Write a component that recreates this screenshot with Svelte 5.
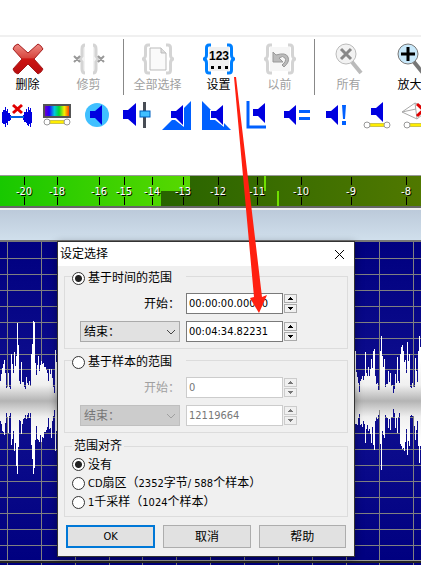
<script lang="ts">
  let mode = $state('time')
  let align = $state('none')
  let startTime = $state('00:00:00.00000')
  let endTime = $state('00:04:34.82231')
  let startSample = $state('0')
  let endSample = $state('12119664')

  const marks = [
    { db: -20, x: 24 },
    { db: -18, x: 57 },
    { db: -16, x: 99 },
    { db: -15, x: 124 },
    { db: -14, x: 152 },
    { db: -13, x: 183 },
    { db: -12, x: 218 },
    { db: -11, x: 257 },
    { db: -10, x: 301 },
    { db: -9, x: 351 },
    { db: -8, x: 406 }
  ]

  const columns = Array.from({ length: 60 }, (_, i) => Math.round(7 + i * 33.85))
  const rows = Array.from({ length: 60 }, (_, i) => Math.round(16 + i * 15.92))

  // peaks above and below the centre line, one value per pixel column
  const chunks = [
    {
      start: 0,
      up: [20, 27, 33, 37, 41, 28, 13, 14, 28, 14, 12, 47, 37, 28, 49, 35, 45, 78, 56, 20, 17, 39, 19, 19, 14, 12, 24, 18, 16, 20, 15, 47, 57, 80, 79, 38, 26, 36, 45, 30, 36, 40, 37, 38, 34, 34, 31, 28, 20, 32, 27, 32, 23, 14, 8, 51, 39],
      down: [20, 23, 30, 31, 34, 22, 12, 16, 32, 15, 12, 44, 38, 30, 50, 42, 65, 73, 46, 19, 20, 33, 23, 18, 17, 14, 18, 14, 12, 17, 12, 44, 58, 73, 67, 39, 25, 38, 39, 41, 34, 41, 36, 37, 31, 31, 29, 26, 17, 28, 27, 37, 20, 15, 9, 50, 30]
    },
    {
      start: 355,
      up: [50, 29, 24, 18, 9, 20, 22, 25, 21, 25, 49, 28, 25, 34, 25, 32, 42, 33, 50, 52, 25, 17, 18, 11, 11, 50, 65, 45, 34, 42, 14, 17, 17, 30, 19, 28, 15, 16, 8, 12, 27, 18, 44, 20, 18, 47, 54, 56, 50, 39, 41, 28, 59, 40, 47, 14, 13, 18, 14, 14, 43, 30, 19, 50, 65, 54],
      down: [23, 23, 24, 17, 13, 24, 23, 26, 20, 23, 42, 28, 24, 30, 28, 33, 42, 26, 44, 49, 20, 16, 18, 14, 9, 43, 69, 30, 34, 37, 14, 16, 17, 27, 18, 29, 16, 16, 8, 12, 27, 17, 32, 16, 12, 43, 45, 48, 47, 50, 41, 28, 54, 40, 45, 15, 14, 15, 15, 25, 39, 29, 20, 45, 62, 45]
    }
  ]

  function wavePath(start: number, up: number[], down: number[]) {
    return up.map((u, i) => `M${start + i} ${159 - u}h1v${u + down[i]}h-1z`).join('')
  }
</script>

{#snippet speaker(x: number, y: number)}
  <path d="M{x} {y + 6}h5l7-6v20l-7-7h-5z" fill="#0000e0" />
{/snippet}

{#snippet range(y: number)}
  <path d="M8 {y}h15" stroke="#999" stroke-width="4" />
  <path d="M8 {y}h15" stroke="#ffee00" stroke-width="3" />
  <circle cx="6" cy={y} r="3" fill="#fff" stroke="#999" />
  <circle cx="26" cy={y} r="3" fill="#fff" stroke="#999" />
{/snippet}

{#snippet braces(color: string)}
  <path
    d="M8 2H6Q3.500 2 3.500 5V12Q3.500 15 1 16Q3.500 17 3.500 20V27Q3.500 30 6 30H8M24 2h2q2.500 0 2.500 3v7q0 3 2.500 4q-2.500 1-2.500 4v7q0 3-2.500 3h-2"
    fill="none"
    stroke={color}
    stroke-width="3"
  />
{/snippet}

{#snippet spinner(name: string, disabled: boolean)}
  <span class="spinner">
    <button type="button" aria-label="{name} +" {disabled}>
      <svg width="5" height="3"><path d="M2 0h1v1h1v1h1v1H0V2h1V1h1z" fill="currentColor" /></svg>
    </button>
    <button type="button" aria-label="{name} -" {disabled}>
      <svg width="5" height="3"><path d="M0 0h5v1H4v1H3v1H2V2H1V1H0z" fill="currentColor" /></svg>
    </button>
  </span>
{/snippet}

{#snippet endSelect(disabled: boolean)}
  <span class="select">
    <select aria-label="结束" {disabled}>
      <option>结束：</option>
    </select>
    <svg width="10" height="6"><path d="M1 1l4 4 4-4" fill="none" stroke="currentColor" /></svg>
  </span>
{/snippet}

<main>
  <header>
    <div class="tools">
      <button class="tool">
        <svg width="32" height="32" viewBox="0 0 32 32">
          <defs>
            <linearGradient id="red" x1="0" y1="0" x2="0" y2="1">
              <stop offset="0" stop-color="#ee8a84" />
              <stop offset=".45" stop-color="#d84840" />
              <stop offset=".5" stop-color="#cc1512" />
              <stop offset="1" stop-color="#b80c10" />
            </linearGradient>
          </defs>
          <path d="M6 1L16 10L26 1Q29 2 31 6L22 16L31 26Q30 29 26 31L16 21L6 31Q2 30 1 26L10 16L1 6Q2 2 6 1Z" fill="url(#red)" stroke="#a51c1c" />
        </svg>
        删除
      </button>
      <button class="tool" disabled>
        <svg width="32" height="32" viewBox="0 0 32 32">
          <path d="M12 2q-3 0-3 4v7l-2 3 2 3v7q0 4 3 4M20 2q3 0 3 4v7l2 3-2 3v7q0 4-3 4" fill="#f2f2f2" stroke="#d4d4d4" stroke-width="3" />
          <path d="M1 13l6 6M7 13l-6 6M25 13l6 6M31 13l-6 6" stroke="#999" stroke-width="2" />
        </svg>
        修剪
      </button>
      <span class="sep"></span>
      <button class="tool" disabled>
        <svg width="32" height="32" viewBox="0 0 32 32">
          {@render braces('#d4d4d4')}
          <path d="M8 5h11l5 5v17H8z" fill="#fafafa" stroke="#bbb" />
          <path d="M19 5v5h5" fill="#ddd" stroke="#bbb" />
        </svg>
        全部选择
      </button>
      <button class="tool">
        <svg width="32" height="32" viewBox="0 0 32 32">
          <path d="M6 4h20v24H6z" fill="#f0f0f0" />
          {@render braces('#0080ff')}
          <text class="digits" x="16" y="17" text-anchor="middle">123</text>
          <path d="M8 23h3v3H8zM15 23h3v3h-3zM22 23h3v3h-3z" fill="#000" />
        </svg>
        设置
      </button>
      <button class="tool" disabled>
        <svg width="32" height="32" viewBox="0 0 32 32">
          <path d="M6 4h20v24H6z" fill="#f6f6f6" />
          {@render braces('#d4d4d4')}
          <path d="M9 9v10h10l-4-4q4-3 6 0t-3 7l2 2q6-5 4-10t-12-2z" fill="#bbb" stroke="#999" />
        </svg>
        以前
      </button>
      <span class="sep"></span>
      <button class="tool" disabled>
        <svg width="32" height="32" viewBox="0 0 32 32">
          <path d="M19 19l9 11" stroke="#bbb" stroke-width="4" />
          <circle cx="13" cy="11" r="10" fill="#f2f2f2" stroke="#bbb" />
          <path d="M8 6l10 10M18 6L8 16" stroke="#888" stroke-width="3" />
        </svg>
        所有
      </button>
      <button class="tool">
        <svg width="32" height="32" viewBox="0 0 32 32">
          <path d="M20 19l9 11" stroke="#777" stroke-width="4" />
          <circle cx="14" cy="11" r="10" fill="#c8e8fa" stroke="#777" />
          <path d="M14 4v14M7 11h14" stroke="#000" stroke-width="3" />
        </svg>
        放大
      </button>
    </div>

    <div class="effects">
      <button aria-label="静音">
        <svg width="32" height="32" viewBox="0 0 32 32">
          <path d="M1 13h1v11H1zM2 11h2v14H2zM4 8h1v20H4zM5 12h1v12H5zM6 10h1v16H6zM7 14h2v8H7zM9 16h1v5H9zM22 16h1v5h-1zM23 13h2v10h-2zM25 10h1v14h-1zM26 13h1v13h-1zM27 8h1v19h-1zM28 11h1v14h-1zM29 9h1v19h-1zM30 13h1v11h-1z" fill="#0000e0" />
          <path d="M9 18h14" stroke="#0060e0" stroke-width="2" />
          <path d="M12 6l9 8M21 6l-9 8" stroke="#e00000" stroke-width="3" />
        </svg>
      </button>
      <button aria-label="频谱">
        <svg width="32" height="32" viewBox="0 0 32 32">
          <defs>
            <linearGradient id="spectrum">
              <stop offset="0" stop-color="#8000c0" />
              <stop offset=".2" stop-color="#2000ff" />
              <stop offset=".4" stop-color="#00c8e0" />
              <stop offset=".58" stop-color="#00d830" />
              <stop offset=".78" stop-color="#f8f000" />
              <stop offset="1" stop-color="#ff2000" />
            </linearGradient>
          </defs>
          <rect x="3" y="6" width="26" height="12" fill="url(#spectrum)" stroke="#555" stroke-width="2" />
          {@render range(23)}
        </svg>
      </button>
      <button aria-label="音量">
        <svg width="32" height="32" viewBox="0 0 32 32">
          <circle cx="16" cy="16" r="12" fill="#40c0ff" />
          {@render speaker(9, 6)}
        </svg>
      </button>
      <button aria-label="调节音量">
        <svg width="32" height="32" viewBox="0 0 32 32">
          <path d="M2 11h5l8-7v23l-8-7H2z" fill="#0000e0" />
          <path d="M22 3h3v26h-3z" fill="#484d55" />
          <rect x="19" y="12" width="10" height="6" fill="#40c0ff" stroke="#0060c0" />
        </svg>
      </button>
      <button aria-label="淡入">
        <svg width="32" height="32" viewBox="0 0 32 32">
          <path d="M1 31L30 2v29z" fill="#0060ff" />
          <path d="M9 11h5l9-8v25l-9-7H9z" fill="#fff" />
          {@render speaker(10, 6)}
        </svg>
      </button>
      <button aria-label="淡出">
        <svg width="32" height="32" viewBox="0 0 32 32">
          <path d="M1 2l29 29H1z" fill="#0060ff" />
          <path d="M9 11h5l9-8v25l-9-7H9z" fill="#fff" />
          {@render speaker(10, 6)}
        </svg>
      </button>
      <button aria-label="直流偏移">
        <svg width="32" height="32" viewBox="0 0 32 32">
          <path d="M7 2v26h18" fill="none" stroke="#0060ff" stroke-width="3" />
          {@render speaker(12, 4)}
        </svg>
      </button>
      <button aria-label="匹配音量">
        <svg width="32" height="32" viewBox="0 0 32 32">
          {@render speaker(3, 6)}
          <path d="M18 11h11v3H18zM18 18h11v3H18z" fill="#0060ff" />
        </svg>
      </button>
      <button aria-label="最大音量">
        <svg width="32" height="32" viewBox="0 0 32 32">
          {@render speaker(5, 6)}
          <path d="M21 6h4l-1 14h-2zM21 22h4v4h-4z" fill="#0060ff" />
        </svg>
      </button>
      <button aria-label="音量范围">
        <svg width="32" height="32" viewBox="0 0 32 32">
          {@render speaker(10, 3)}
          {@render range(26)}
        </svg>
      </button>
      <button aria-label="擦除">
        <svg width="32" height="32" viewBox="0 0 32 32">
          <path d="M1 13L14 4l14 6-12 10z" fill="#fff" stroke="#aaa" />
          <path d="M14 4l2 16M1 13l14-3" stroke="#aaa" />
          <path d="M16 5l13 12M29 5L16 17" stroke="#e00000" stroke-width="3" />
          {@render range(26)}
        </svg>
      </button>
    </div>
  </header>

  <div class="meter">
    <svg width="100%" height="30">
      <defs>
        <linearGradient id="level" gradientUnits="userSpaceOnUse" x1="0" y1="0" x2="190" y2="0">
          <stop offset="0" stop-color="#18c800" />
          <stop offset="1" stop-color="#58d800" />
        </linearGradient>
        <linearGradient id="idle" gradientUnits="userSpaceOnUse" x1="160" y1="0" x2="421" y2="0">
          <stop offset="0" stop-color="#286400" />
          <stop offset="1" stop-color="#507800" />
        </linearGradient>
      </defs>
      <rect width="100%" height="30" fill="url(#idle)" />
      <path d="M0 0h190v15h-29v15H0z" fill="url(#level)" />
      <path d="M264 0h2v15h-2zM277 15h2v15h-2z" fill="#70e000" />
      {#each marks as mark}
        <path d="M{mark.x} 1h1v8h-1zM{mark.x} 21h1v8h-1z" fill="#000" />
        <text x={mark.x} y="19" text-anchor="middle">{mark.db}</text>
      {/each}
    </svg>
  </div>
  <div class="overview"></div>

  <div class="track">
    <svg width="100%" height="100%">
      <defs>
        <linearGradient id="peak" gradientUnits="userSpaceOnUse" x1="0" y1="119" x2="0" y2="199">
          <stop offset="0" stop-color="#fff" />
          <stop offset=".3" stop-color="#f0f0f0" />
          <stop offset=".5" stop-color="#b4b4b4" />
          <stop offset=".7" stop-color="#f0f0f0" />
          <stop offset="1" stop-color="#fff" />
        </linearGradient>
      </defs>
      {#each rows as y}
        <rect x="0" {y} width="100%" height="1" fill="#808080" />
      {/each}
      {#each columns as x}
        <rect {x} y="0" width="1" height="100%" fill="#808080" />
      {/each}
      {#each chunks as chunk}
        <path d={wavePath(chunk.start, chunk.up, chunk.down)} fill="url(#peak)" shape-rendering="crispEdges" />
      {/each}
      <rect x="0" y="318" width="100%" height="1" fill="#999" />
      <rect x="0" y="319" width="100%" height="2" fill="#222" />
    </svg>
  </div>

  <form class="dialog" onsubmit={(e) => e.preventDefault()}>
    <div class="title">
      <span>设定选择</span>
      <button type="button" aria-label="关闭">
        <svg width="11" height="11"><path d="M1 1l9 9M10 1l-9 9" stroke="#000" /></svg>
      </button>
    </div>

    <fieldset>
      <legend class="mode">
        <label><input type="radio" value="time" bind:group={mode} />基于时间的范围</label>
      </legend>
      <div class="row">
        <label class="caption" for="start-time">开始：</label>
        <input id="start-time" type="text" bind:value={startTime} />
        {@render spinner('开始', false)}
      </div>
      <div class="row">
        {@render endSelect(false)}
        <input type="text" aria-label="结束时间" bind:value={endTime} />
        {@render spinner('结束', false)}
      </div>
    </fieldset>

    <fieldset class="samples">
      <legend class="mode">
        <label><input type="radio" value="sample" bind:group={mode} />基于样本的范围</label>
      </legend>
      <div class="row off">
        <label class="caption" for="start-sample">开始：</label>
        <input id="start-sample" type="text" bind:value={startSample} disabled />
        {@render spinner('开始样本', true)}
      </div>
      <div class="row off">
        {@render endSelect(true)}
        <input type="text" aria-label="结束样本" bind:value={endSample} disabled />
        {@render spinner('结束样本', true)}
      </div>
    </fieldset>

    <fieldset class="align">
      <legend>范围对齐</legend>
      <label><input type="radio" value="none" bind:group={align} />没有</label>
      <label>
        <input type="radio" value="cd" bind:group={align} />
        <span><small>CD</small>扇区（<small>2352</small>字节<small>/ 588</small>个样本）</span>
      </label>
      <label>
        <input type="radio" value="kilo" bind:group={align} />
        <span><small>1</small>千采样（<small>1024</small>个样本）</span>
      </label>
    </fieldset>

    <div class="actions">
      <button class="primary">OK</button>
      <button type="button">取消</button>
      <button type="button">帮助</button>
    </div>
  </form>

  <svg class="arrow" width="34" height="238">
    <path d="M1 0h2l26 220 5-2-8 18-9-15 4-1z" fill="#ff2010" />
  </svg>
</main>

<style>
  :global(body) {
    margin: 0;
    background: #fff;
  }

  main {
    position: relative;
    display: flex;
    flex-direction: column;
    height: 100vh;
    overflow: hidden;
    font-family: 'DejaVu Sans Condensed', 'Noto Sans CJK SC', sans-serif;
    font-size: 12px;
    line-height: 16px;
    color: #000;
  }

  * {
    box-sizing: border-box;
  }

  svg {
    display: block;
    flex: none;
  }

  small {
    font-size: 11px;
  }

  button,
  input,
  select {
    margin: 0;
    padding: 0;
    font: inherit;
    color: inherit;
  }

  header {
    flex: none;
    margin-top: 35px;
    border-top: 2px solid #f0f0f0;
    height: 138px;
    overflow: hidden;
  }

  .tools,
  .effects {
    display: flex;
    margin-left: -3px;
  }

  .tools {
    padding-top: 2px;
  }

  .tools button,
  .effects button {
    flex: none;
    border: 0;
    background: none;
  }

  .tool {
    display: flex;
    flex-direction: column;
    align-items: center;
    gap: 2px;
    width: 61px;
    padding-top: 4px;
    white-space: nowrap;
  }

  .tool:disabled {
    color: #a0a0a0;
  }

  .digits {
    font: bold 12px 'Liberation Sans', sans-serif;
  }

  .sep {
    flex: none;
    width: 1px;
    height: 56px;
    margin: 0 3px 0 4px;
    background: #888;
  }

  .effects {
    padding-top: 4px;
  }

  .effects button {
    display: flex;
    justify-content: center;
    width: 40px;
  }

  .meter {
    flex: none;
    border-top: 1px solid #999;
    border-bottom: 2px solid #666;
    margin-top: 2px;
  }

  .meter text {
    fill: #fff;
    font-size: 11px;
    text-shadow: 1px 1px 0 #000;
  }

  .overview {
    flex: none;
    height: 34px;
    border-top: 2px solid #f0f0f0;
    border-bottom: 2px solid #777;
    background: linear-gradient(#bccada, #d0dfec);
  }

  .track {
    flex: 1;
    min-height: 0;
    background: linear-gradient(#000080, #101090 160px, #000080 318px);
  }

  .dialog {
    position: absolute;
    left: 57px;
    top: 241px;
    width: 298px;
    border: 1px solid #333;
    background: #f0f0f0;
    box-shadow: 0 2px 8px rgba(0, 0, 0, 0.4);
  }

  .title {
    display: flex;
    align-items: center;
    justify-content: space-between;
    height: 24px;
    padding: 0 9px 0 2px;
    background: #fff;
  }

  .title button {
    border: 0;
    background: none;
  }

  fieldset {
    min-width: 0;
    margin: 0 6px;
    padding: 7px 0 6px 15px;
    border: 1px solid #dcdcdc;
  }

  legend {
    margin-left: -8px;
    padding: 0 2px;
  }

  .mode {
    display: flex;
    align-items: flex-end;
    height: 20px;
    padding: 0 14px 0 0;
  }

  label {
    display: flex;
    align-items: center;
    gap: 3px;
  }

  input[type='radio'] {
    appearance: none;
    width: 13px;
    height: 13px;
    border: 1px solid #333;
    border-radius: 50%;
    background: #fff;
  }

  input[type='radio']:checked {
    background: radial-gradient(circle, #222 3px, #fff 4px);
  }

  .row {
    display: grid;
    grid-template-columns: 100px 97px 13px;
    align-items: center;
    height: 21px;
    column-gap: 6px;
  }

  .row + .row {
    margin-top: 7px;
  }

  .row input {
    width: 97px;
    height: 21px;
    padding: 0 2px;
    border: 1px solid #7a7a7a;
    background: #fff;
    font-size: 11px;
  }

  .caption {
    justify-content: flex-end;
  }

  .spinner {
    display: grid;
    gap: 1px;
    margin-left: -5px;
  }

  .spinner button {
    display: flex;
    align-items: center;
    justify-content: center;
    width: 13px;
    height: 9px;
    border: 1px solid #aaa;
    background: #f0f0f0;
  }

  .select {
    position: relative;
  }

  .select select {
    display: block;
    appearance: none;
    width: 100%;
    height: 21px;
    padding: 0 3px;
    border: 1px solid #aaa;
    border-radius: 0;
    background: #e1e1e1;
    opacity: 1;
  }

  .select svg {
    position: absolute;
    right: 4px;
    top: 8px;
    color: #444;
    pointer-events: none;
  }

  .off .caption,
  .off .select svg {
    color: #a0a0a0;
  }

  .off input,
  .off button {
    border-color: #ccc;
    color: #777;
  }

  .off select {
    border-color: #bfbfbf;
    background: #ccc;
    color: #777;
  }

  .samples {
    margin-top: 1px;
  }

  .align {
    margin-top: 5px;
    padding: 1px 7px 4px;
  }

  .align legend {
    margin-left: 0;
  }

  .align label {
    height: 19px;
    white-space: nowrap;
  }

  .actions {
    display: flex;
    gap: 8px;
    padding: 8px;
  }

  .actions button {
    flex: 1;
    height: 23px;
    border: 1px solid #adadad;
    background: #e1e1e1;
  }

  .actions .primary {
    border: 2px solid #0078d7;
    font-size: 11px;
  }

  .arrow {
    position: absolute;
    left: 233px;
    top: 77px;
    pointer-events: none;
  }
</style>
